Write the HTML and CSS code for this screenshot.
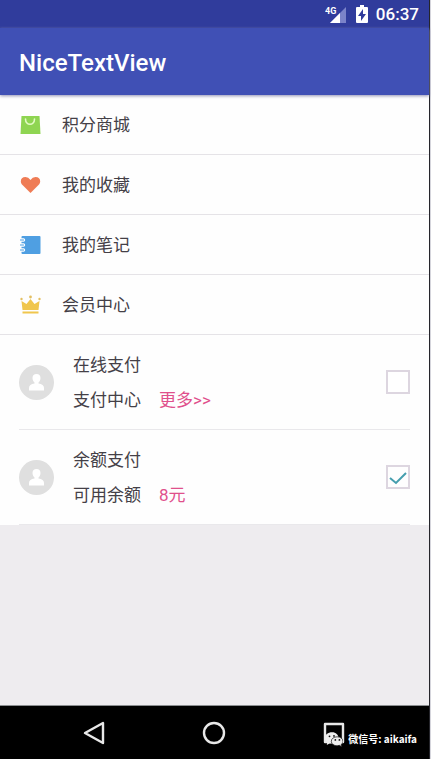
FILE: index.html
```html
<!DOCTYPE html>
<html lang="zh-CN">
<head>
<meta charset="utf-8">
<meta name="viewport" content="width=device-width, initial-scale=1">
<title>NiceTextView</title>
<link rel="stylesheet" href="styles.css">
</head>
<body>
<div class="screen">
  <div class="status">
    <svg class="signal" viewBox="0 0 22 20" role="img" aria-label="4G">
      <path d="M21 3V19H5Z" fill="#7b83c9"/>
      <path d="M15 9V19H5Z" fill="#fff"/>
      <text class="signal-label" x="0" y="10">4G</text>
    </svg>
    <svg class="battery" viewBox="0 0 12 18" aria-hidden="true">
      <path d="M4 0H8V2H11Q12 2 12 3V17Q12 18 11 18H1Q0 18 0 17V3Q0 2 1 2H4Z" fill="#fff"/>
      <path d="M7 4L2 11H5V16L10 9H7Z" fill="#303c9c"/>
    </svg>
    <time class="clock">06:37</time>
  </div>
  <header class="appbar"><h1 class="title">NiceTextView</h1></header>
  <main class="content">
    <nav class="menu">
      <a class="menu-item" href="#mall">
        <svg class="icon" viewBox="0 0 20 20" aria-hidden="true">
          <path d="M1 1H19L20 19H0Z" fill="#8fd552"/>
          <path d="M5 4C5 11 14 11 14 4" fill="none" stroke="#e3fbc5" stroke-width="1.600" stroke-linecap="round"/>
        </svg>
        <span>积分商城</span>
      </a>
      <a class="menu-item" href="#favorites">
        <svg class="icon" viewBox="0 0 20 20" aria-hidden="true">
          <path d="M10 18L2 10C-1 7 0 2 5 2Q8 2 10 5Q12 2 15 2C20 2 21 7 18 10Z" fill="#ef7c55"/>
        </svg>
        <span>我的收藏</span>
      </a>
      <a class="menu-item" href="#notes">
        <svg class="icon" viewBox="0 0 20 20" aria-hidden="true">
          <path d="M2 1H19Q20 1 20 2V18Q20 19 19 19H2Q1 19 1 18V2Q1 1 2 1Z" fill="#4f9fe2"/>
          <path d="M0 5H3M0 10H3M0 15H3" stroke="#fff" stroke-width="3.400" stroke-linecap="round"/>
          <path d="M0 5H3M0 10H3M0 15H3" stroke="#4f9fe2" stroke-width="1.200" stroke-linecap="round"/>
        </svg>
        <span>我的笔记</span>
      </a>
      <a class="menu-item" href="#members">
        <svg class="icon" viewBox="0 0 20 20" aria-hidden="true">
          <path d="M1 6L6 9L10 4L14 9L19 6L18 15H2Z" fill="#f0c64d"/>
          <path d="M2 16.500H18V18.500H2Z" fill="#f0c64d"/>
          <g fill="#e3bf63"><circle cx="1" cy="4" r="1.2"/><circle cx="10" cy="2" r="1.4"/><circle cx="19" cy="4" r="1.2"/></g>
        </svg>
        <span>会员中心</span>
      </a>
    </nav>
    <div class="payments">
      <label class="payment">
        <svg class="avatar" viewBox="0 0 35 35" aria-hidden="true">
          <circle cx="17.5" cy="17.5" r="17.5" fill="#dfdfdf"/>
          <path d="M17.500 9C20 9 21.500 10.500 21.500 13C21.500 15 20.500 16.500 19.500 17.500V18.500C23 19 25 20.500 25 23V25.500H10V23C10 20.500 12 19 15.500 18.500V17.500C14.500 16.500 13.500 15 13.500 13C13.500 10.500 15 9 17.500 9Z" fill="#fff"/>
        </svg>
        <span class="payment-text">
          <span>在线支付</span>
          <span class="detail"><span>支付中心</span><span class="accent">更多&gt;&gt;</span></span>
        </span>
        <input class="check" type="checkbox">
      </label>
      <label class="payment">
        <svg class="avatar" viewBox="0 0 35 35" aria-hidden="true">
          <circle cx="17.5" cy="17.5" r="17.5" fill="#dfdfdf"/>
          <path d="M17.500 9C20 9 21.500 10.500 21.500 13C21.500 15 20.500 16.500 19.500 17.500V18.500C23 19 25 20.500 25 23V25.500H10V23C10 20.500 12 19 15.500 18.500V17.500C14.500 16.500 13.500 15 13.500 13C13.500 10.500 15 9 17.500 9Z" fill="#fff"/>
        </svg>
        <span class="payment-text">
          <span>余额支付</span>
          <span class="detail"><span>可用余额</span><span class="accent">8元</span></span>
        </span>
        <input class="check" type="checkbox" checked>
      </label>
    </div>
  </main>
  <footer class="navbar">
    <button class="nav-button" type="button" aria-label="返回">
      <svg class="nav-icon" viewBox="0 0 24 24" aria-hidden="true"><path d="M21 2V22L3 12Z"/></svg>
    </button>
    <button class="nav-button" type="button" aria-label="主页">
      <svg class="nav-icon" viewBox="0 0 24 24" aria-hidden="true"><circle cx="12" cy="12" r="10"/></svg>
    </button>
    <button class="nav-button" type="button" aria-label="最近任务">
      <svg class="nav-icon" viewBox="0 0 24 24" aria-hidden="true"><path d="M2 3H20V21H2Z"/></svg>
    </button>
    <div class="credit">
      <svg class="wechat" viewBox="0 0 20 16" aria-hidden="true">
        <path d="M8 0C3 0 0 3 0 6.500C0 8.500 1 10 2.500 11L2 14L5 12.500H8C12 12.500 15 10 15 6.500C15 3 12 0 8 0Z" fill="#eee"/>
        <path d="M13.500 5C10 5 7 7 7 10C7 13 10 15 13.500 15L16 14.500L18.500 16L18 13.500C19.500 12.500 20 11.500 20 10C20 7 17 5 13.500 5Z" fill="#eee" stroke="#111" stroke-width=".8"/>
        <g fill="#111"><circle cx="5" cy="4.500" r="1"/><circle cx="10" cy="4" r="1"/><circle cx="11.500" cy="8.500" r="1"/><circle cx="16" cy="8.500" r="1"/></g>
      </svg>
      <span>微信号: aikaifa</span>
    </div>
  </footer>
</div>
</body>
</html>
```

FILE: styles.css
```css
* {
  box-sizing: border-box;
}

body {
  margin: 0;
  background: #d5d5dc;
  color: #444047;
  font: 17px/24px Roboto, "Noto Sans CJK SC", sans-serif;
}

.screen {
  display: flex;
  flex-direction: column;
  min-height: 100vh;
  margin-right: 1px;
  border-right: 1px solid #25252b;
  background: #eeecef;
}

.status {
  display: flex;
  align-items: center;
  justify-content: flex-end;
  height: 28px;
  padding-right: 10px;
  background: #303c9c;
  color: #fff;
}

.signal {
  width: 22px;
  height: 20px;
}

.signal-label {
  fill: #fff;
  font-size: 9px;
  font-weight: 700;
}

.battery {
  width: 12px;
  height: 18px;
  margin: 0 8px 0 9px;
}

.clock {
  font-size: 17px;
  font-weight: 500;
}

.appbar {
  position: relative;
  display: flex;
  align-items: center;
  height: 67px;
  padding: 2px 19px 0;
  background: #4050b5;
  box-shadow: 0 1px 3px #9090b4;
  color: #fff;
}

.title {
  margin: 0;
  font-size: 24px;
  font-weight: 500;
}

.content {
  flex: 1;
}

.menu,
.payments {
  background: #fefefe;
}

.menu-item {
  display: flex;
  align-items: center;
  gap: 21px;
  height: 60px;
  padding: 0 20px;
  border-bottom: 1px solid #e5e3e7;
  color: inherit;
  text-decoration: none;
}

.icon {
  width: 21px;
  height: 20px;
}

.payments {
  padding: 0 19px;
}

.payment {
  display: flex;
  align-items: center;
  height: 95px;
  border-bottom: 1px solid #e9e8eb;
}

.avatar {
  width: 35px;
  height: 35px;
}

.payment-text {
  display: flex;
  flex: 1;
  flex-direction: column;
  gap: 11px;
  margin-left: 19px;
}

.detail {
  display: flex;
  gap: 18px;
}

.accent {
  color: #e0508c;
}

.check {
  appearance: none;
  width: 24px;
  height: 24px;
  margin: 0;
  border: 2px solid #ddd6e0;
  background: #fff;
}

.check:checked {
  background: url("data:image/svg+xml,%3Csvg xmlns='http://www.w3.org/2000/svg' viewBox='0 0 20 20'%3E%3Cpath d='M2 11L8 16L18 6' fill='none' stroke='%23459eae' stroke-width='2'/%3E%3C/svg%3E") center / 20px 20px no-repeat;
}

.navbar {
  position: relative;
  display: flex;
  align-items: center;
  justify-content: center;
  height: 54px;
  border-top: 1px solid #8b8e90;
  background: #000;
}

.nav-button {
  display: flex;
  justify-content: center;
  width: 28%;
  padding: 0;
  border: 0;
  background: none;
}

.nav-icon {
  width: 24px;
  height: 24px;
  fill: none;
  stroke: #e8e8e8;
  stroke-width: 2.4;
  stroke-linejoin: round;
}

.credit {
  position: absolute;
  right: 12px;
  bottom: 8px;
  display: flex;
  align-items: center;
  gap: 5px;
  color: #fff;
  font: 700 10px/24px "Noto Sans CJK SC", sans-serif;
}

.wechat {
  width: 18px;
  height: 15px;
}
```
